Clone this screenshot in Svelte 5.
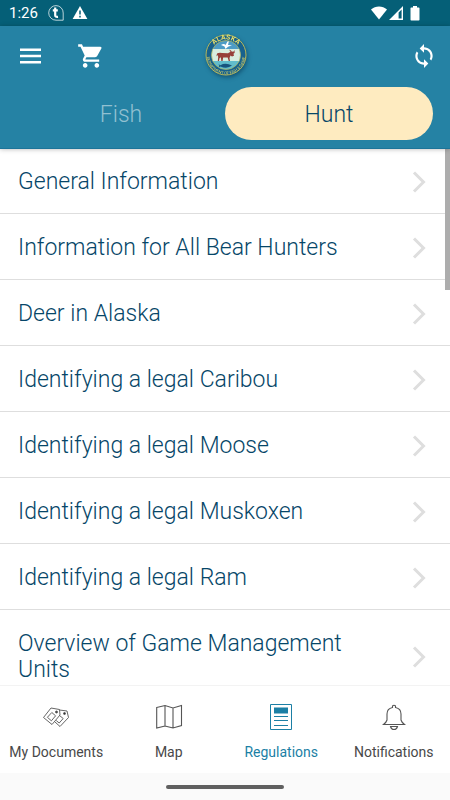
<script>
  const topics = [
    'General Information',
    'Information for All Bear Hunters',
    'Deer in Alaska',
    'Identifying a legal Caribou',
    'Identifying a legal Moose',
    'Identifying a legal Muskoxen',
    'Identifying a legal Ram',
    'Overview of Game Management Units'
  ];
  const tabs = ['Fish', 'Hunt'];
  let active = $state('Hunt');
</script>

<div class="app">
  <div class="status">
    <div class="side">
      <span>1:26</span>
      <svg width="16" height="16" viewBox="0 0 16 16" fill="none" stroke="#fff">
        <path d="M8 .6a7.2 7.2 0 1 0 0 14.600h7.200V8A7.200 7.200 0 0 0 8 .6z" stroke-width=".9" opacity=".8" />
        <path d="M7.200 2.600v7.600q0 2 2.800 1.600M4.800 5.400h5" stroke-width="2.200" />
      </svg>
      <svg width="16" height="16" viewBox="0 0 16 16">
        <path d="M8 1 15.400 14H.6z" fill="#fff" />
        <path d="M8 5.500v4M8 10.800v1.600" stroke="#055f77" stroke-width="1.500" />
      </svg>
    </div>
    <div class="side">
      <svg width="16" height="14" viewBox="0 0 16 14" fill="#fff"><path d="M0 3.600C4.500-.4 11.500-.4 16 3.600L8 13.600z" /></svg>
      <svg width="14" height="14" viewBox="0 0 14 14" fill="#fff"><path fill-rule="evenodd" d="M14 0v14H0zM12.600 3.600 9.600 6.600V12.600H12.600z" /></svg>
      <svg class="battery" width="10" height="15" viewBox="0 0 10 15" fill="#fff"><path d="M3 0h4v1.500h1.700q.8 0 .8.8v11.400q0 .8-.8.8H1.300q-.8 0-.8-.8V2.300q0-.8.8-.8H3z" /></svg>
    </div>
  </div>

  <header>
    <div class="bar">
      <div class="actions">
        <button aria-label="Menu">
          <svg width="21" height="16" viewBox="0 0 21 16" stroke="#fff" stroke-width="2.400"><path d="M0 1.700h21M0 8h21M0 14.300h21" /></svg>
        </button>
        <button aria-label="Cart">
          <svg width="28" height="28" viewBox="0 0 24 24" fill="#fff"><path d="M7 18c-1.100 0-1.990.9-1.990 2S5.900 22 7 22s2-.9 2-2-.9-2-2-2zM1 2v2h2l3.600 7.590-1.350 2.450c-.16.28-.25.61-.25.960 0 1.100.9 2 2 2h12v-2H7.420c-.14 0-.25-.11-.25-.25l.03-.12.9-1.630h7.450c.75 0 1.410-.41 1.750-1.030l3.580-6.490A1 1 0 0 0 20 4H5.210l-.94-2H1zm16 16c-1.100 0-1.990.9-1.990 2s.89 2 1.990 2 2-.9 2-2-.9-2-2-2z" /></svg>
        </button>
      </div>
      <svg class="seal" width="44" height="44" viewBox="0 0 44 44">
        <defs>
          <clipPath id="disc"><circle cx="22" cy="22" r="14.500" /></clipPath>
          <path id="upper" d="M6.500 22a15.500 15.500 0 0 1 31 0" />
          <path id="lower" d="M2.600 22a19.400 19.400 0 0 0 38.800 0" />
        </defs>
        <circle cx="22" cy="22" r="20" fill="#17618d" stroke="#b5b75c" stroke-width="1" />
        <g clip-path="url(#disc)">
          <path d="M7 7h30v10H7z" fill="#4d9cc6" />
          <path d="M7 16h30v13H7z" fill="#d8eee0" />
          <path d="M7 28h30v10H7z" fill="#61bccb" />
          <path d="M17 12q3-2 4.500 0l2-3.500 1.500-.7-1 4.200 4 .2-4 1.500-2.500 2.300-1-2.500z" fill="#fff" />
          <path d="M13 20.500q2-1.300 5-.6l6 .3 2.500-1.400-1.500-2.300 2 1 .6 1 1.800.2 1-1.600.3 2.600-1.200 1 .5 2-2 .7-1.500-.8-1 2.300.5 3h-1.300l-1-3.300-4.500-.2-.6 3.500h-1.300l-.5-3.600-1.300 1-.5 2.800h-1.200l.4-4.200-.7-2-1.200 1.600z" fill="#97413a" />
          <path d="M14.500 31.300l2 1q5-3 11.500.3-5 3.800-11.500.8l-2 1 .8-1.600z" fill="#17547e" />
        </g>
        <circle cx="22" cy="22" r="14.500" fill="none" stroke="#b5b75c" stroke-width=".7" />
        <text font-size="7" font-weight="700" fill="#e3dc69"><textPath href="#upper" startOffset="50%" text-anchor="middle">ALASKA</textPath></text>
        <text font-size="4" fill="#d3d069"><textPath href="#lower" startOffset="50%" text-anchor="middle">DEPARTMENT OF FISH &amp; GAME</textPath></text>
      </svg>
      <div class="actions end">
        <button aria-label="Sync">
          <svg width="26" height="26" viewBox="0 0 24 24" fill="#fff"><path d="M12 4V1L8 5l4 4V6c3.310 0 6 2.690 6 6 0 1.010-.25 1.970-.7 2.800l1.460 1.460A7.930 7.930 0 0 0 20 12c0-4.420-3.580-8-8-8zm0 14c-3.310 0-6-2.690-6-6 0-1.010.25-1.970.7-2.800L5.240 7.740A7.930 7.930 0 0 0 4 12c0 4.420 3.580 8 8 8v3l4-4-4-4v3z" /></svg>
        </button>
      </div>
    </div>
    <div class="tabs">
      {#each tabs as tab}
        <button class:selected={active === tab} aria-pressed={active === tab} onclick={() => (active = tab)}>{tab}</button>
      {/each}
    </div>
  </header>

  <main>
    <div class="list">
      {#each topics as topic}
        <a href="#topic">
          <span>{topic}</span>
          <svg width="14" height="22" viewBox="0 0 14 22" fill="none" stroke="#dedede" stroke-width="3"><path d="M2 1.500 11.500 11 2 20.500" /></svg>
        </a>
      {/each}
    </div>
    <div class="thumb"></div>
  </main>

  <nav>
    <a href="#documents">
      <svg width="28" height="28" viewBox="0 0 28 28" fill="none" stroke="#555" stroke-width=".9">
        <path d="M1.500 14.500 9 5l8.500 1.500.5 5.500L10 21.500z" />
        <path d="m9.800 9.500 3.800 3.300-4.200 5-4-3.500z" />
        <path d="m17.500 7 7.500 1 1.500 6.500-8.500 9-5-4.500" />
        <path d="m17.500 12.500 3.700 3-4 4.500-3-2.500" />
        <circle cx="14.500" cy="9" r="1" fill="#333" /><circle cx="22.500" cy="10.500" r="1" fill="#333" />
      </svg>
      <span>My Documents</span>
    </a>
    <a href="#map">
      <svg width="28" height="28" viewBox="0 0 28 28" fill="none" stroke="#555" stroke-width="1.100"><path d="M1.700 4.500 10 2.500l8 2.500 8.500-2.500v20L18 25l-8-2-8.300 2zM10 2.500V23M18 5v20" /></svg>
      <span>Map</span>
    </a>
    <a href="#regulations" class="current" aria-current="page">
      <svg width="28" height="28" viewBox="0 0 28 28" fill="none" stroke="#1b7fa5">
        <path d="M3.500 1.500h21v25h-21z" /><path d="M7 4.500h14v6H7z" fill="#1b7fa5" stroke="none" />
        <path d="M7 13.500h14M7 17.500h14M7 22.500h14" />
      </svg>
      <span>Regulations</span>
    </a>
    <a href="#notifications">
      <svg width="28" height="28" viewBox="0 0 28 28" fill="none" stroke="#555" stroke-width="1.100">
        <path d="M12.500 4.500V3q1.500-1.500 3 0v1.500C19 5.200 21 7.500 21 11v6q.5 2 3.500 4.500H3.500Q6.500 19 7 17v-6c0-3.500 2-5.800 5.500-6.500z" />
        <path d="M10.500 23.500h7q-.8 3-3.500 3t-3.500-3z" />
      </svg>
      <span>Notifications</span>
    </a>
  </nav>
  <footer><div></div></footer>
</div>

<style>
  :global(body) { margin: 0; }
  .app {
    display: flex;
    flex-direction: column;
    height: 100vh;
    font-family: Roboto, "Liberation Sans", sans-serif;
    background: #fff;
  }
  svg { display: block; flex: none; }
  button { border: 0; padding: 0; background: none; font: inherit; cursor: pointer; }
  a { color: inherit; text-decoration: none; }

  .status {
    display: flex;
    justify-content: space-between;
    align-items: center;
    height: 26px;
    padding: 0 30px 0 9px;
    background: #055f77;
    color: #fff;
    font-size: 15px;
  }
  .side { display: flex; align-items: center; }
  .side span { margin-right: 10px; line-height: 28px; }
  .side svg + svg { margin-left: 2px; }
  .side span + svg { margin-right: 6px; }
  .side svg.battery { margin-left: 7px; }

  header {
    position: relative;
    z-index: 1;
    height: 122px;
    background: #2582a4;
    box-shadow: 0 1px 0 #1c7499, 0 1px 5px rgba(0, 0, 0, 0.3);
  }
  .bar { display: flex; align-items: center; height: 60px; padding: 0 13px 0 20px; }
  .actions { display: flex; flex: 1; align-items: center; gap: 36px; }
  .end { justify-content: flex-end; }
  .bar .seal { margin: 0 6px 3px 0; border-radius: 50%; filter: drop-shadow(1px 2px 2px rgba(0, 40, 70, 0.5)); }
  .tabs { display: flex; padding: 1px 17px 0; }
  .tabs button {
    flex: 1;
    height: 53px;
    border-radius: 27px;
    color: #92c0d1;
    font-size: 23px;
    font-weight: 300;
    line-height: 55px;
  }
  .tabs .selected { background: #feebc0; color: #064668; }

  main { position: relative; flex: 1; min-height: 0; }
  .list { height: 100%; overflow-y: auto; scrollbar-width: none; }
  .list a {
    display: flex;
    align-items: center;
    justify-content: space-between;
    gap: 24px;
    padding: 21px 24px 18px 18px;
    border-bottom: 1px solid #dedede;
    color: #064668;
    font-size: 23px;
    font-weight: 300;
    line-height: 26px;
  }
  .list span { max-width: 350px; }
  .thumb { position: absolute; top: 0; right: 0; width: 5px; height: 142px; background: #adadad; }

  nav { display: flex; height: 87px; border-top: 1px solid #f3f3f3; background: #fff; }
  nav a {
    flex: 1 1 0;
    display: flex;
    flex-direction: column;
    align-items: center;
    gap: 12px;
    padding-top: 17px;
    color: #484848;
    font-size: 14px;
    line-height: 18px;
  }
  nav .current { color: #1b7fa5; }
  footer { display: flex; justify-content: center; height: 27px; background: #fafafa; }
  footer div { width: 118px; height: 4px; margin-top: 12px; border-radius: 2px; background: #606060; }
</style>
